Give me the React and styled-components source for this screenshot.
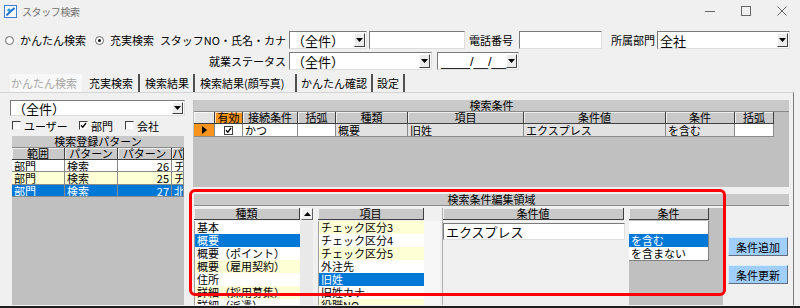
import React from 'react'
import styled, { createGlobalStyle } from 'styled-components'

const GlobalStyle = createGlobalStyle`
  html, body { margin: 0; padding: 0; background: #f0f0f0; }
  * { box-sizing: border-box; }
`

const YELLOW = '#ffffd6'
const BLUE = '#0078d7'
const ORANGE = '#f7941d'

const topCols = '21px 28px 55px 38px 72px 116px 142px 69px 39px'
const leftCols = '53px 53px 54px 12px'

const kinds = ['基本', '概要', '概要（ポイント）', '概要（雇用契約）', '住所', '詳細（採用募集）', '詳細（派遣）']
const items = ['チェック区分3', 'チェック区分4', 'チェック区分5', '外注先', '旧姓', '旧姓カナ', '役職NO']

const patterns = [
  { area: '部門', name: '検索', no: 26, extra: 'チ' },
  { area: '部門', name: '検索', no: 25, extra: 'チ' },
  { area: '部門', name: '検索', no: 27, extra: '北' },
]

const rowBg = (i, selected) => (i === selected ? BLUE : i % 2 ? YELLOW : '#fff')

const Arrow = ({ up }) => (
  <svg width="7" height="4" viewBox="0 0 7 4">
    <path d={up ? 'M0 4h7L3.5 0z' : 'M0 0h7L3.5 4z'} fill="#000" />
  </svg>
)

const Tick = () => (
  <svg width="7" height="7" viewBox="0 0 7 7">
    <path d="M1 3.2l1.8 2L6 1" stroke="#000" strokeWidth="1.3" fill="none" />
  </svg>
)

const App = () => {
  return (
    <>
      <GlobalStyle />
      <Window>
        <TitleBar>
          <svg width="13" height="13" viewBox="0 0 13 13">
            <rect x="0.5" y="0.5" width="12" height="12" fill="#f4f8fd" stroke="#3f7fcf" />
            <path d="M2.5 10.5 C4.5 8, 6.5 6.5, 10.5 3" stroke="#1f6fd0" strokeWidth="2" fill="none" />
            <circle cx="5" cy="5" r="1.6" fill="#1f9bd0" />
          </svg>
          <TitleText>スタッフ検索</TitleText>
          <Controls>
            <CtrlBtn>
              <svg width="10" height="10"><path d="M0 5.5h10" stroke="#666" /></svg>
            </CtrlBtn>
            <CtrlBtn>
              <svg width="10" height="10"><rect x="0.5" y="0.5" width="9" height="9" fill="none" stroke="#666" /></svg>
            </CtrlBtn>
            <CtrlBtn>
              <svg width="10" height="10"><path d="M0.5 0.5l9 9M9.5 0.5l-9 9" stroke="#666" /></svg>
            </CtrlBtn>
          </Controls>
        </TitleBar>

        <Form>
          <Row>
            <Radio $w={90}><RadioDot />かんたん検索</Radio>
            <Radio $w={60}><RadioDot $on />充実検索</Radio>
            <Label $w={134}>スタッフNO・氏名・カナ</Label>
            <Combo $w={78}>
              <ComboText>（全件）</ComboText>
              <DropBtn><Arrow /></DropBtn>
            </Combo>
            <TextBox $w={96} $ml={2} />
            <Label $w={54} $pr={6}>電話番号</Label>
            <TextBox $w={83} />
            <Label $w={55} $pr={2}>所属部門</Label>
            <Combo $w={133}>
              <ComboText>全社</ComboText>
              <DropBtn><Arrow /></DropBtn>
            </Combo>
          </Row>
          <Row>
            <Label $w={284}>就業ステータス</Label>
            <Combo $w={143}>
              <ComboText>（全件）</ComboText>
              <DropBtn><Arrow /></DropBtn>
            </Combo>
            <Combo $w={82} $ml={5}>
              <DateText>____/__/__</DateText>
              <DropBtn><Arrow /></DropBtn>
            </Combo>
          </Row>
        </Form>

        <TabStrip>
          <Tab $w={72} $pl={1} $disabled>かんたん検索</Tab>
          <Tab $w={58} $pl={7} $sep>充実検索</Tab>
          <Tab $w={55} $pl={5} $sep>検索結果</Tab>
          <Tab $w={102} $pl={5} $sep>検索結果(顔写真)</Tab>
          <Tab $w={76} $pl={4} $sep>かんたん確認</Tab>
          <Tab $w={32} $pl={4} $sep>設定</Tab>
        </TabStrip>

        <Body>
          <LeftPanel>
            <Combo $w={175} $h={16} $ml={2}>
              <ComboText>（全件）</ComboText>
              <DropBtn $h={12}><Arrow /></DropBtn>
            </Combo>
            <CheckRow>
              <CheckItem $w={67}><CheckBox />ユーザー</CheckItem>
              <CheckItem $w={46}><CheckBox><Tick /></CheckBox>部門</CheckItem>
              <CheckItem $w={50}><CheckBox />会社</CheckItem>
            </CheckRow>
            <PatternGrid>
              <GridTitle>検索登録パターン</GridTitle>
              <GridRow $cols={leftCols}>
                <HeadCell>範囲</HeadCell>
                <HeadCell>パターン</HeadCell>
                <HeadCell>パターン</HeadCell>
                <HeadCell>パ</HeadCell>
              </GridRow>
              {patterns.map((p, i) => {
                const bg = rowBg(i, 2)
                const fg = i === 2 ? '#fff' : '#000'
                return (
                  <GridRow key={i} $cols={leftCols} $h={i === 1 ? 13 : 12}>
                    <Cell $bg={bg} $fg={fg}>{p.area}</Cell>
                    <Cell $bg={bg} $fg={fg}>{p.name}</Cell>
                    <Cell $bg={bg} $fg={fg} $align="right">{p.no}</Cell>
                    <Cell $bg={bg} $fg={fg}>{p.extra}</Cell>
                  </GridRow>
                )
              })}
            </PatternGrid>
          </LeftPanel>

          <RightPanel>
            <CondGrid>
              <GridTitle>検索条件</GridTitle>
              <GridRow $cols={topCols}>
                <HeadCell $bg="#e4e4e4" />
                <HeadCell $bg={ORANGE}>有効</HeadCell>
                <HeadCell>接続条件</HeadCell>
                <HeadCell>括弧</HeadCell>
                <HeadCell>種類</HeadCell>
                <HeadCell>項目</HeadCell>
                <HeadCell>条件値</HeadCell>
                <HeadCell>条件</HeadCell>
                <HeadCell>括弧</HeadCell>
              </GridRow>
              <GridRow $cols={topCols} $h={13}>
                <Cell $bg={ORANGE} $align="center">
                  <svg width="5" height="8" viewBox="0 0 5 8"><path d="M0 0l5 4-5 4z" fill="#000" /></svg>
                </Cell>
                <Cell $align="center"><CheckBox $flat><Tick /></CheckBox></Cell>
                <Cell>かつ</Cell>
                <Cell />
                <Cell $bg="#e2e2e2">概要</Cell>
                <Cell $bg="#e2e2e2">旧姓</Cell>
                <Cell $bg="#e2e2e2">エクスプレス</Cell>
                <Cell $bg="#e2e2e2">を含む</Cell>
                <Cell />
              </GridRow>
            </CondGrid>

            <EditArea>
              <EditHeader>検索条件編集領域</EditHeader>
              <EditBody>
                <ListCol $w={119}>
                  <ListHeadRow>
                    <ColHead $w={106}>種類</ColHead>
                    <ScrollBtn><Arrow up /></ScrollBtn>
                  </ListHeadRow>
                  <ListBody $track="#e9e9e9">
                    {kinds.map((k, i) => (
                      <ListItem key={k} $bg={rowBg(i, 1)} $fg={i === 1 ? '#fff' : '#000'}>{k}</ListItem>
                    ))}
                  </ListBody>
                </ListCol>

                <ListCol $w={122} $ml={5}>
                  <ListHeadRow>
                    <ColHead $w={106}>項目</ColHead>
                  </ListHeadRow>
                  <ListBody $track="#f7f7f7">
                    {items.map((k, i) => (
                      <ListItem key={k} $bg={i === 4 ? BLUE : i % 2 ? '#fff' : YELLOW} $fg={i === 4 ? '#fff' : '#000'}>{k}</ListItem>
                    ))}
                  </ListBody>
                </ListCol>

                <ValueCol>
                  <ColHead $w={181}>条件値</ColHead>
                  <ValueBox>エクスプレス</ValueBox>
                </ValueCol>

                <CondCol>
                  <ColHead $w={80}>条件</ColHead>
                  <CondList>
                    <ListItem $w={79} />
                    <ListItem $w={79} $bg={BLUE} $fg="#fff">を含む</ListItem>
                    <ListItem $w={79}>を含まない</ListItem>
                  </CondList>
                </CondCol>

                <ButtonCol>
                  <ActionButton>条件追加</ActionButton>
                  <ActionButton>条件更新</ActionButton>
                </ButtonCol>
              </EditBody>
            </EditArea>
          </RightPanel>
        </Body>

        <Highlight />
      </Window>
    </>
  )
}
export default App

const Window = styled.div`
  position: relative;
  width: 800px;
  height: 308px;
  background: #f0f0f0;
  border-bottom: 2px solid #1e1e1e;
  overflow: hidden;
  font-family: "Noto Sans CJK JP", "Liberation Sans", sans-serif;
  font-size: 11px;
  color: #000;
`
const TitleBar = styled.div`
  display: flex;
  align-items: center;
  height: 22px;
  padding-left: 4px;
`
const TitleText = styled.span`
  margin-left: 5px;
  font-size: 10px;
  color: #707070;
  letter-spacing: -0.4px;
`
const Controls = styled.div`
  margin-left: auto;
  display: flex;
  height: 22px;
`
const CtrlBtn = styled.div`
  width: 36px;
  display: flex;
  align-items: center;
  justify-content: center;
`
const Form = styled.div`
  padding: 9px 0 0 5px;
`
const Row = styled.div`
  display: flex;
  align-items: center;
  height: 18px;
  & + & { margin-top: 3px; }
`
const Label = styled.div`
  width: ${p => p.$w}px;
  padding-right: ${p => p.$pr ?? 3}px;
  text-align: right;
  white-space: nowrap;
`
const Radio = styled.div`
  width: ${p => p.$w}px;
  display: flex;
  align-items: center;
  gap: 6px;
  white-space: nowrap;
`
const RadioDot = styled.span`
  width: 9px;
  height: 9px;
  border-radius: 50%;
  border: 1px solid #6a6a6a;
  background: #fff;
  display: flex;
  align-items: center;
  justify-content: center;
  &::after {
    content: '';
    width: 3px;
    height: 3px;
    border-radius: 50%;
    background: ${p => (p.$on ? '#111' : 'transparent')};
  }
`
const Combo = styled.div`
  width: ${p => p.$w}px;
  height: ${p => p.$h || 18}px;
  margin-left: ${p => p.$ml || 0}px;
  flex-shrink: 0;
  display: flex;
  align-items: center;
  background: #fff;
  border: 1px solid;
  border-color: #7a7a7a #dedede #dedede #7a7a7a;
  font-size: 13px;
`
const ComboText = styled.span`
  flex: 1;
  padding-left: 2px;
  white-space: nowrap;
  line-height: 15px;
`
const DateText = styled(ComboText)`
  font-family: "Liberation Sans", sans-serif;
  padding-left: 3px;
`
const DropBtn = styled.span`
  width: 11px;
  height: ${p => p.$h || 14}px;
  margin-right: 1px;
  border: 1px solid;
  border-color: #fff #404040 #404040 #fff;
  background: #ececec;
  display: flex;
  align-items: center;
  justify-content: center;
`
const TextBox = styled.div`
  width: ${p => p.$w}px;
  height: 18px;
  margin-left: ${p => p.$ml || 0}px;
  background: #fff;
  border: 1px solid;
  border-color: #7a7a7a #dedede #dedede #7a7a7a;
`
const TabStrip = styled.div`
  display: flex;
  height: 18px;
  margin-top: 4px;
  padding-left: 10px;
`
const Tab = styled.div`
  width: ${p => p.$w}px;
  padding-left: ${p => p.$pl}px;
  display: flex;
  align-items: center;
  white-space: nowrap;
  color: ${p => (p.$disabled ? '#a6a6a6' : '#000')};
  background: ${p => (p.$disabled ? '#f8f8f8' : 'transparent')};
  border-right: ${p => (p.$sep ? '2px solid #505050' : 'none')};
`
const Body = styled.div`
  display: flex;
  width: 794px;
  height: 213px;
  padding: 7px 0 0 8px;
  border-top: 1px solid #d4d4d4;
  border-right: 1px solid #7a7a7a;
`
const LeftPanel = styled.div`
  width: 182px;
  display: flex;
  flex-direction: column;
`
const CheckRow = styled.div`
  display: flex;
  align-items: center;
  height: 11px;
  margin-top: 4px;
  padding-left: 4px;
`
const CheckItem = styled.div`
  width: ${p => p.$w}px;
  display: flex;
  align-items: center;
  gap: 3px;
  white-space: nowrap;
`
const CheckBox = styled.span`
  width: 9px;
  height: 9px;
  display: inline-flex;
  align-items: center;
  justify-content: center;
  background: #fff;
  border: 1px solid;
  border-color: ${p => (p.$flat ? '#404040' : '#404040 #f0f0f0 #f0f0f0 #404040')};
`
const GridBase = styled.div`
  display: flex;
  flex-direction: column;
  background: #c0c0c0;
  overflow: hidden;
`
const PatternGrid = styled(GridBase)`
  margin: 5px 0 0 4px;
  width: 172px;
  flex: 1;
`
const CondGrid = styled(GridBase)`
  height: 87px;
  flex-shrink: 0;
  padding-left: 1px;
`
const GridTitle = styled.div`
  height: 12px;
  flex-shrink: 0;
  line-height: 11px;
  background: #c9c9c9;
  border-bottom: 1px solid #8a8a8a;
  text-align: center;
  white-space: nowrap;
`
const GridRow = styled.div`
  display: grid;
  flex-shrink: 0;
  grid-template-columns: ${p => p.$cols};
  height: ${p => p.$h || 12}px;
`
const HeadCell = styled.div`
  background: ${p => p.$bg || '#c9c9c9'};
  border-right: 1px solid #404040;
  border-bottom: 1px solid #404040;
  box-shadow: inset 1px 1px 0 rgba(255, 255, 255, 0.7);
  text-align: center;
  line-height: 11px;
  white-space: nowrap;
  overflow: hidden;
`
const Cell = styled.div`
  display: flex;
  align-items: center;
  justify-content: ${p => (p.$align === 'right' ? 'flex-end' : p.$align === 'center' ? 'center' : 'flex-start')};
  padding: 0 2px;
  background: ${p => p.$bg || '#fff'};
  color: ${p => p.$fg || '#000'};
  border-right: 1px solid #8a8a8a;
  border-bottom: 1px solid #8a8a8a;
  white-space: nowrap;
  overflow: hidden;
`
const RightPanel = styled.div`
  margin-left: 3px;
  width: 596px;
  display: flex;
  flex-direction: column;
  min-height: 0;
`
const EditArea = styled.div`
  flex: 1;
  min-height: 0;
  overflow: hidden;
  margin-top: 7px;
  padding-left: 1px;
  display: flex;
  flex-direction: column;
`
const EditHeader = styled.div`
  height: 12px;
  flex-shrink: 0;
  line-height: 11px;
  background: #c9c9c9;
  border-bottom: 1px solid #8a8a8a;
  text-align: center;
`
const EditBody = styled.div`
  flex: 1;
  display: flex;
  margin-top: 2px;
`
const ListCol = styled.div`
  width: ${p => p.$w}px;
  margin-left: ${p => p.$ml || 0}px;
  flex-shrink: 0;
  display: flex;
  flex-direction: column;
`
const ListHeadRow = styled.div`
  display: flex;
  height: 12px;
  flex-shrink: 0;
`
const ColHead = styled.div`
  width: ${p => p.$w}px;
  height: 12px;
  flex-shrink: 0;
  line-height: 11px;
  text-align: center;
  background: #c9c9c9;
  border-right: 1px solid #404040;
  border-bottom: 1px solid #404040;
  box-shadow: inset 1px 1px 0 rgba(255, 255, 255, 0.7);
`
const ScrollBtn = styled.div`
  width: 12px;
  margin-left: 1px;
  display: flex;
  align-items: center;
  justify-content: center;
  background: #f0f0f0;
  border: 1px solid;
  border-color: #fff #606060 #606060 #fff;
`
const ListBody = styled.div`
  flex: 1;
  margin-top: 1px;
  background: ${p => p.$track};
  border-left: 1px solid #a0a0a0;
`
const ListItem = styled.div`
  width: ${p => p.$w || 105}px;
  height: 13px;
  flex-shrink: 0;
  line-height: 13px;
  padding-left: 2px;
  background: ${p => p.$bg || '#fff'};
  color: ${p => p.$fg || '#000'};
  white-space: nowrap;
  overflow: hidden;
`
const ValueCol = styled.div`
  width: 183px;
  margin-left: 2px;
  flex-shrink: 0;
  display: flex;
  flex-direction: column;
  border-left: 1px solid #b0b0b0;
`
const ValueBox = styled.div`
  margin-top: 3px;
  height: 17px;
  padding-left: 2px;
  line-height: 15px;
  font-size: 13px;
  background: #fff;
  border: 1px solid;
  border-color: #7a7a7a #dedede #dedede #7a7a7a;
`
const CondCol = styled.div`
  width: 94px;
  margin-left: 4px;
  flex-shrink: 0;
  background: #c0c0c0;
`
const CondList = styled.div`
  width: 80px;
  margin-top: 1px;
  border-right: 1px solid #808080;
  border-bottom: 1px solid #808080;
  background: #fff;
`
const ButtonCol = styled.div`
  width: 60px;
  margin-left: 5px;
  flex-shrink: 0;
  padding-top: 29px;
  display: flex;
  flex-direction: column;
  gap: 9px;
`
const ActionButton = styled.div`
  height: 19px;
  display: flex;
  align-items: center;
  justify-content: center;
  background: #9fceff;
  border: 1px solid;
  border-color: #d8ecff #5f6f80 #5f6f80 #d8ecff;
`
const Highlight = styled.div`
  position: absolute;
  left: 189px;
  top: 189px;
  width: 537px;
  height: 107px;
  border: 3px solid #ff0000;
  border-radius: 6px;
  pointer-events: none;
`
